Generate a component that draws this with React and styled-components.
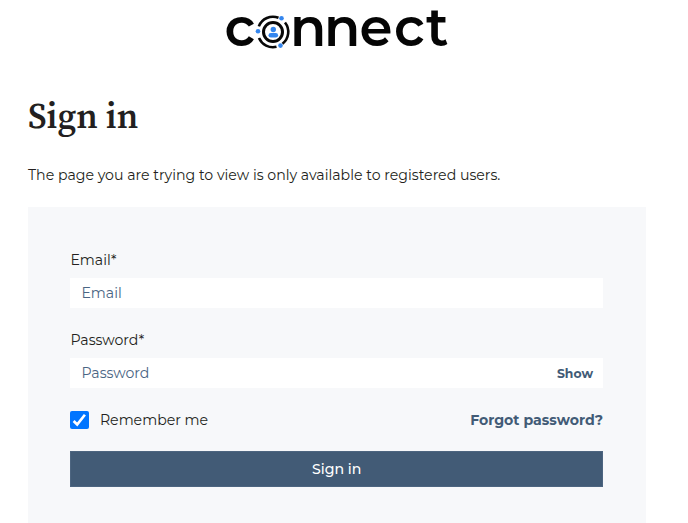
import React, { useState } from 'react';
import styled, { createGlobalStyle } from 'styled-components';

const GlobalStyle = createGlobalStyle`
  * {
    box-sizing: border-box;
  }

  body {
    margin: 0;
    background: #fff;
    color: #231f20;
    font-family: Montserrat, Inter, sans-serif;
    font-size: 14.13px;
    overflow: hidden;
  }
`;

const Page = styled.main`
  display: flex;
  flex-direction: column;
  height: 523px;
  padding: 0 42px 0 28px;
`;

const LogoImage = styled.svg`
  display: block;
  flex: none;
  width: 240px;
  height: 60px;
  margin-left: 188px;
  overflow: visible;
`;

const LogoText = styled.text`
  font-family: Montserrat, Inter, sans-serif;
  font-size: 53px;
  font-weight: 600;
  fill: #050505;
`;

const Title = styled.h1`
  margin: 32px 0 0;
  font-family: 'Source Serif Pro', 'Source Serif 4', 'Liberation Serif', serif;
  font-size: 35.4px;
  font-weight: 600;
  line-height: 48px;
`;

const Intro = styled.p`
  margin: 25px 0 22px;
  line-height: 20px;
`;

const Form = styled.form`
  flex: 1;
  padding: 43px 43px 0 42.4px;
  background: #f7f8fa;
`;

const Field = styled.div`
  margin-bottom: 22px;
`;

const Label = styled.label`
  display: block;
  margin-bottom: 8px;
  line-height: 20px;
`;

const InputBox = styled.div`
  display: flex;
  align-items: center;
  height: 30px;
  padding: 0 10px 0 11px;
  background: #fff;
`;

const Input = styled.input`
  flex: 1;
  min-width: 0;
  padding: 0;
  border: 0;
  outline: none;
  background: transparent;
  color: #425b76;
  font: inherit;

  &::placeholder {
    color: #4a6584;
    opacity: 1;
  }
`;

const ShowButton = styled.button`
  padding: 0;
  border: 0;
  background: none;
  color: #425b76;
  font: inherit;
  font-size: 12.4px;
  font-weight: 700;
`;

const Options = styled.div`
  display: flex;
  align-items: center;
  justify-content: space-between;
  height: 20px;
`;

const Remember = styled.label`
  display: flex;
  align-items: center;
  gap: 11px;
`;

const CheckWrap = styled.span`
  display: grid;

  > * {
    grid-area: 1 / 1;
  }
`;

const CheckBox = styled.input`
  appearance: none;
  width: 18.5px;
  height: 18.5px;
  margin: 0;
  border-radius: 2px;
  background: #0075ff;
`;

const Forgot = styled.a`
  color: #425b76;
  font-weight: 700;
  text-decoration: none;
`;

const Submit = styled.button`
  display: block;
  width: 100%;
  height: 36px;
  margin-top: 21px;
  padding: 0;
  border: 1px solid #4d6580;
  background: #425b76;
  color: #fff;
  font: inherit;
  font-weight: 500;
`;

const Logo = () => (
  <LogoImage viewBox="216 0 240 60" role="img" aria-label="connect">
    <LogoText x="224.5" y="46.4">c</LogoText>
    <g fill="none" stroke="#080808" strokeWidth="2.6">
      <circle cx="273" cy="32" r="9.5" strokeWidth="3" />
      <path d="M258.8 26.4A15.2 15.2 0 0 1 278.5 17.8" />
      <path d="M285 22.5A15.2 15.2 0 0 1 282.5 43.8" />
      <path d="M276.5 46.8A15.2 15.2 0 0 1 259 38" />
    </g>
    <g fill="#3486ee">
      <circle cx="281.5" cy="18.3" r="2.3" />
      <circle cx="258" cy="31.3" r="2.3" />
      <circle cx="280.5" cy="45.6" r="2.3" />
      <circle cx="273.3" cy="29.5" r="2.7" />
      <rect x="268.5" y="33" width="9.6" height="4.6" rx="2.3" />
    </g>
    <LogoText x="290 324 359.5 394 426" y="46.4">nnect</LogoText>
  </LogoImage>
);

const App = () => {
  const [remember, setRemember] = useState(true);
  const [visible, setVisible] = useState(false);

  return (
    <>
      <GlobalStyle />
      <Page>
        <Logo />
        <Title>Sign in</Title>
        <Intro>The page you are trying to view is only available to registered users.</Intro>
        <Form onSubmit={(e) => e.preventDefault()}>
          <Field>
            <Label htmlFor="email">Email*</Label>
            <InputBox>
              <Input id="email" type="email" placeholder="Email" />
            </InputBox>
          </Field>
          <Field>
            <Label htmlFor="password">Password*</Label>
            <InputBox>
              <Input id="password" type={visible ? 'text' : 'password'} placeholder="Password" />
              <ShowButton type="button" onClick={() => setVisible(!visible)}>
                {visible ? 'Hide' : 'Show'}
              </ShowButton>
            </InputBox>
          </Field>
          <Options>
            <Remember>
              <CheckWrap>
                <CheckBox type="checkbox" checked={remember} onChange={() => setRemember(!remember)} />
                {remember && (
                  <svg width="18.5" height="18.5" viewBox="0 0 18 18" fill="none" stroke="#fff" strokeWidth="2.6">
                    <path d="M3.5 9.7L7 13.2L14.5 3.6" />
                  </svg>
                )}
              </CheckWrap>
              Remember me
            </Remember>
            <Forgot href="#">Forgot password?</Forgot>
          </Options>
          <Submit type="submit">Sign in</Submit>
        </Form>
      </Page>
    </>
  );
};

export default App;
